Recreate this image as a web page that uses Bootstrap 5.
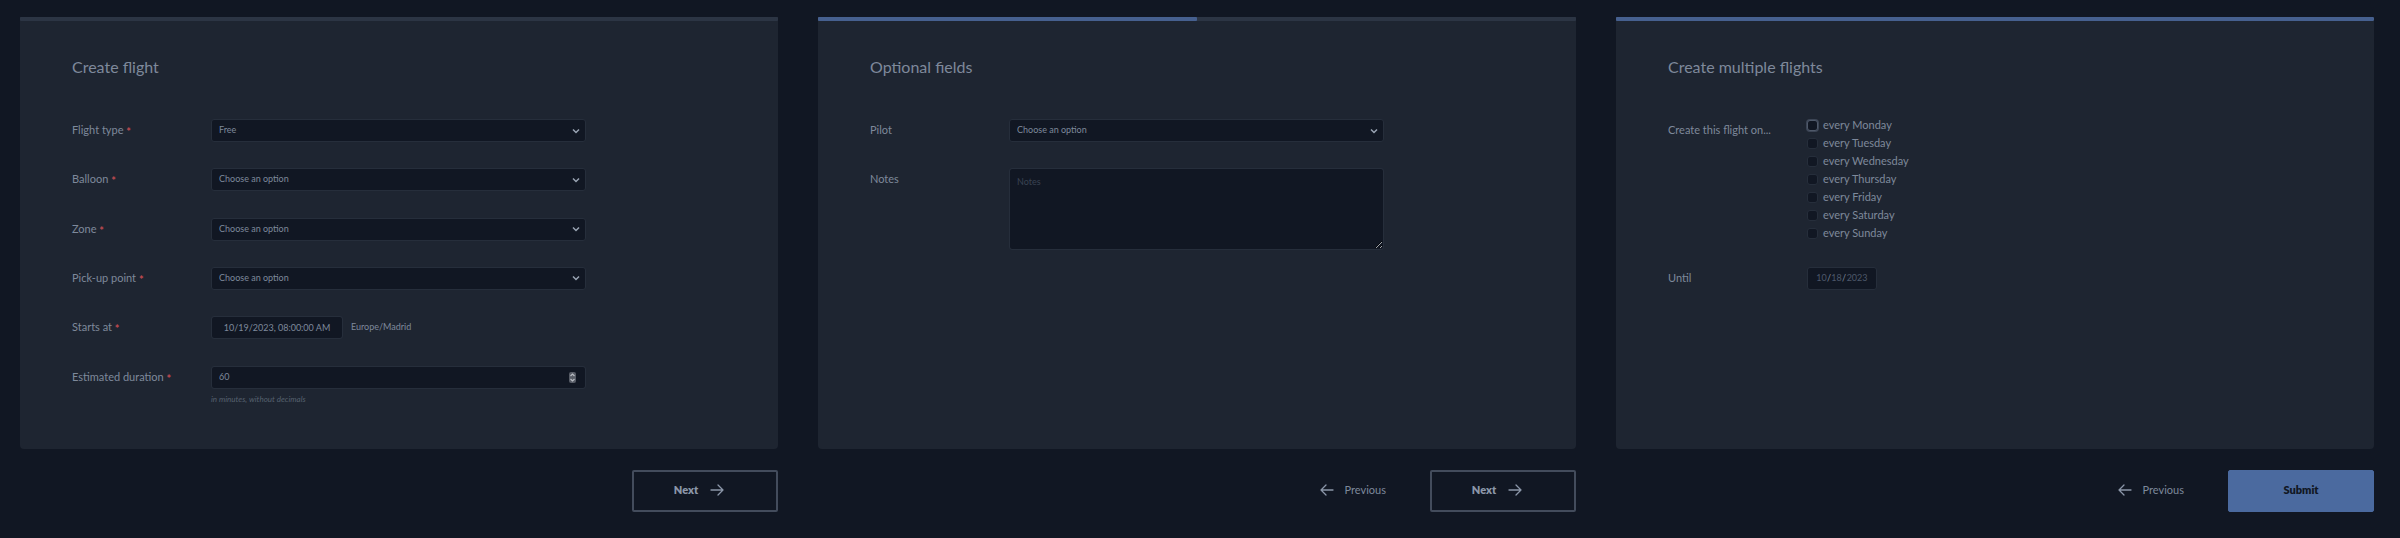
<!DOCTYPE html>
<html lang="en" data-bs-theme="dark">
<head>
<meta charset="utf-8">
<meta name="viewport" content="width=device-width, initial-scale=1">
<title>Create flight</title>
<link href="https://cdn.jsdelivr.net/npm/bootstrap@5.3.0/dist/css/bootstrap.min.css" rel="stylesheet">
<style>
  :root { color-scheme: dark; }
  body {
    font-family: Lato, "Noto Sans", sans-serif;
    font-size: 11px;
    line-height: 18px;
    background: #111723;
    color: #7e899b;
  }
  .wizard { padding: 17px 26px 24px 20px; column-gap: 40px; }
  .step { flex: 1 1 0; min-width: 0; }
  .panel { background: #1e2531; border-radius: 0 0 4px 4px; padding-bottom: 34px; }
  .panel .progress { height: 4px; border-radius: 1px; background: #2c3544; }
  .panel .progress-bar { background: #46608f; border-radius: 0 1px 1px 0; }
  .panel-inner { padding: 34px 52px 0; }
  .panel-title { font-size: 16px; line-height: 24px; font-weight: 400; margin: 0 0 40px; color: #7e899b; }

  .fields { display: grid; grid-template-columns: 139px minmax(0, 375px); grid-template-rows: repeat(6, minmax(0, 1fr)); height: 296px; }
  .field-label { grid-column: 1; line-height: 22px; }
  .field-cell { grid-column: 2; }
  .row-second { grid-row: 2; }
  .row-fourth { grid-row: 4; }
  .tall-control { grid-row: 2 / span 5; }
  .days { grid-row: 1 / span 3; margin-top: -3px; }
  .req { color: #c04a50; font-weight: 700; vertical-align: -2px; }

  .field {
    font-size: 9px;
    line-height: 20px;
    height: 23px;
    min-height: 0;
    padding: 0 7px 1px;
    color: #7e899b;
    background-color: #111723;
    border: 1px solid #262e3b;
    border-radius: 3px;
  }
  select.field {
    padding-right: 20px;
    background-image: url("data:image/svg+xml,%3Csvg xmlns='http://www.w3.org/2000/svg' viewBox='0 0 8 8'%3E%3Cpath d='M1 2.5l3 3 3-3' fill='none' stroke='%239aa4b3' stroke-width='1.5'/%3E%3C/svg%3E");
    background-size: 8px 8px;
    background-position: right 5px center;
  }
  input[type=number].field {
    appearance: textfield;
    background-image: url("data:image/svg+xml,%3Csvg xmlns='http://www.w3.org/2000/svg' viewBox='0 0 7 11'%3E%3Crect width='7' height='11' rx='2' fill='%23575c66'/%3E%3Cpath d='M1.5 4l2-2 2 2M1.5 7l2 2 2-2' fill='none' stroke='%23b9bdc4' stroke-width='1.2'/%3E%3C/svg%3E");
    background-repeat: no-repeat;
    background-size: 7px 11px;
    background-position: right 9px center;
  }
  textarea.field { height: 82px; padding-top: 3px; }
  textarea.field::placeholder { color: #3a4352; opacity: 1; }
  .datetime { width: 132px; text-align: center; padding: 0 0 1px; }
  .zone-name { font-size: 9px; line-height: 22px; }
  .hint { font-size: 8px; line-height: 12px; margin-top: 4px; color: #56616f; }

  .day { height: 18px; gap: 5px; }
  .day .form-check-input { width: 11px; height: 11px; margin: 0; border: 1px solid #262e3b; border-radius: 3px; background-color: #111723; }
  .day .form-check-input:focus { border-color: #4f596a; box-shadow: 0 0 0 1px #3c4555; }
  .date-box { width: 70px; }
  .date-box input { width: 11px; height: 20px; padding: 0; border: 0; background: transparent; color: #4d586a; text-align: center; outline: 0; }
  .date-box input.year { width: 22px; }

  .actions { margin-top: 21px; gap: 44px; }
  .action {
    --bs-btn-color: #8b96a8;
    --bs-btn-font-size: 11px;
    --bs-btn-font-weight: 800;
    --bs-btn-line-height: 18px;
    width: 146px; height: 42px; border-radius: 2px; padding: 0 0 2px;
  }
  .action-outline { border-width: 2px; --bs-btn-border-color: #434c5c; gap: 12px; padding-right: 12px; }
  .action-back { color: #7e899b; font-size: 11px; line-height: 18px; gap: 11px; padding: 0 0 2px; border: 0; }
  .action-submit { background: #4b6a9f; color: #111723; border-color: #4b6a9f; }
  .arrow { width: 14px; height: 12px; fill: none; stroke: #8b96a8; stroke-width: 1.3; stroke-linecap: round; stroke-linejoin: round; }
</style>
</head>
<body>
<main class="wizard d-flex">

  <form class="step">
    <section class="panel">
      <div class="progress" role="progressbar" aria-label="Progress" aria-valuenow="0"><div class="progress-bar" style="width:0%"></div></div>
      <div class="panel-inner">
        <h2 class="panel-title">Create flight</h2>
        <div class="fields">
          <label class="field-label" for="type">Flight type <span class="req">*</span></label>
          <div class="field-cell"><select class="form-select field" id="type"><option>Free</option></select></div>
          <label class="field-label" for="balloon">Balloon <span class="req">*</span></label>
          <div class="field-cell"><select class="form-select field" id="balloon"><option>Choose an option</option></select></div>
          <label class="field-label" for="zone">Zone <span class="req">*</span></label>
          <div class="field-cell"><select class="form-select field" id="zone"><option>Choose an option</option></select></div>
          <label class="field-label" for="pickup">Pick-up point <span class="req">*</span></label>
          <div class="field-cell"><select class="form-select field" id="pickup"><option>Choose an option</option></select></div>
          <label class="field-label" for="starts">Starts at <span class="req">*</span></label>
          <div class="field-cell d-flex gap-2"><input class="form-control field datetime" id="starts" type="text" value="10/19/2023, 08:00:00 AM"><span class="zone-name">Europe/Madrid</span></div>
          <label class="field-label" for="duration">Estimated duration <span class="req">*</span></label>
          <div class="field-cell"><input class="form-control field" id="duration" type="number" value="60"><div class="hint fst-italic">in minutes, without decimals</div></div>
        </div>
      </div>
    </section>
    <div class="actions d-flex justify-content-end">
      <button type="button" class="btn action action-outline d-flex align-items-center justify-content-center">Next
        <svg class="arrow" viewBox="0 0 14 12" aria-hidden="true"><path d="M1 6h12M8 1l5 5-5 5"/></svg></button>
    </div>
  </form>

  <form class="step">
    <section class="panel">
      <div class="progress" role="progressbar" aria-label="Progress" aria-valuenow="50"><div class="progress-bar" style="width:50%"></div></div>
      <div class="panel-inner">
        <h2 class="panel-title">Optional fields</h2>
        <div class="fields">
          <label class="field-label" for="pilot">Pilot</label>
          <div class="field-cell"><select class="form-select field" id="pilot"><option>Choose an option</option></select></div>
          <label class="field-label row-second" for="notes">Notes</label>
          <div class="field-cell tall-control"><textarea class="form-control field" id="notes" placeholder="Notes"></textarea></div>
        </div>
      </div>
    </section>
    <div class="actions d-flex justify-content-end align-items-center">
      <button type="button" class="btn action-back d-flex align-items-center">
        <svg class="arrow" viewBox="0 0 14 12" aria-hidden="true"><path d="M13 6H1M6 1L1 6l5 5"/></svg>Previous</button>
      <button type="button" class="btn action action-outline d-flex align-items-center justify-content-center">Next
        <svg class="arrow" viewBox="0 0 14 12" aria-hidden="true"><path d="M1 6h12M8 1l5 5-5 5"/></svg></button>
    </div>
  </form>

  <form class="step">
    <section class="panel">
      <div class="progress" role="progressbar" aria-label="Progress" aria-valuenow="100"><div class="progress-bar" style="width:100%"></div></div>
      <div class="panel-inner">
        <h2 class="panel-title">Create multiple flights</h2>
        <div class="fields">
          <span class="field-label" id="days-label">Create this flight on...</span>
          <div class="field-cell days" role="group" aria-labelledby="days-label">
            <div class="day d-flex align-items-center"><input class="form-check-input" type="checkbox" id="mon" autofocus><label for="mon">every Monday</label></div>
            <div class="day d-flex align-items-center"><input class="form-check-input" type="checkbox" id="tue"><label for="tue">every Tuesday</label></div>
            <div class="day d-flex align-items-center"><input class="form-check-input" type="checkbox" id="wed"><label for="wed">every Wednesday</label></div>
            <div class="day d-flex align-items-center"><input class="form-check-input" type="checkbox" id="thu"><label for="thu">every Thursday</label></div>
            <div class="day d-flex align-items-center"><input class="form-check-input" type="checkbox" id="fri"><label for="fri">every Friday</label></div>
            <div class="day d-flex align-items-center"><input class="form-check-input" type="checkbox" id="sat"><label for="sat">every Saturday</label></div>
            <div class="day d-flex align-items-center"><input class="form-check-input" type="checkbox" id="sun"><label for="sun">every Sunday</label></div>
          </div>
          <label class="field-label row-fourth" for="until">Until</label>
          <div class="field-cell row-fourth"><div class="field date-box d-flex justify-content-center"><input id="until" value="10" aria-label="Month">/<input value="18" aria-label="Day">/<input class="year" value="2023" aria-label="Year"></div></div>
        </div>
      </div>
    </section>
    <div class="actions d-flex justify-content-end align-items-center">
      <button type="button" class="btn action-back d-flex align-items-center">
        <svg class="arrow" viewBox="0 0 14 12" aria-hidden="true"><path d="M13 6H1M6 1L1 6l5 5"/></svg>Previous</button>
      <button type="submit" class="btn action action-submit">Submit</button>
    </div>
  </form>

</main>
<script src="https://cdn.jsdelivr.net/npm/bootstrap@5.3.0/dist/js/bootstrap.bundle.min.js"></script>
</body>
</html>
